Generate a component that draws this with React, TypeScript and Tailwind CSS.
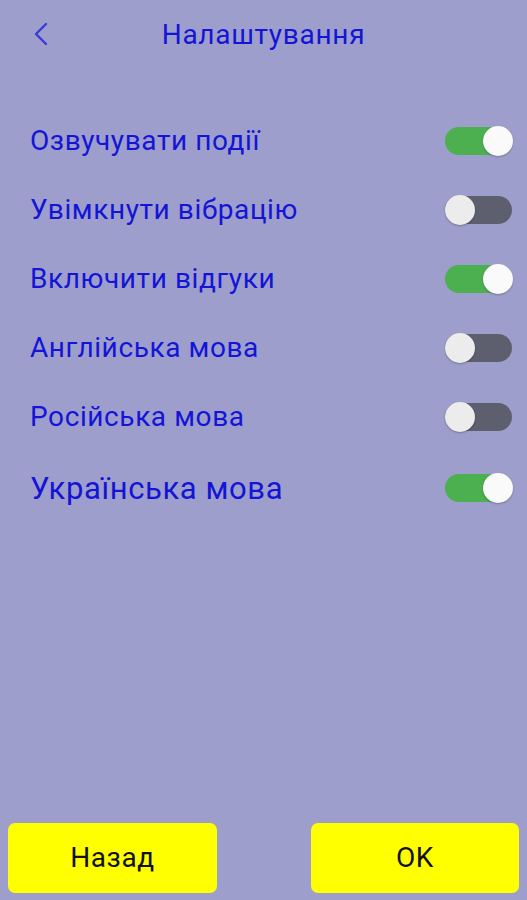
import React from "react";

const rows: { label: string; on: boolean; big?: boolean }[] = [
  { label: "Озвучувати події", on: true },
  { label: "Увімкнути вібрацію", on: false },
  { label: "Включити відгуки", on: true },
  { label: "Англійська мова", on: false },
  { label: "Російська мова", on: false },
  { label: "Українська мова", on: true, big: true },
];

function Toggle({ on }: { on: boolean }) {
  return (
    <div className="relative w-[68px] h-[30px] flex items-center">
      <div className={`w-[67px] h-[28px] rounded-full ${on ? "bg-[#4caf50]" : "bg-[#5e5f6e]"}`} />
      <div
        className={`absolute top-0 w-[30px] h-[30px] rounded-full shadow-[0_1px_2px_rgba(0,0,0,0.25)] ${
          on ? "right-0 bg-[#fafafa]" : "left-0 bg-[#ececec]"
        }`}
      />
    </div>
  );
}

export default function App() {
  return (
    <div
      className="w-[527px] h-[900px] bg-[#9d9ecc] flex flex-col"
      style={{ fontFamily: "Roboto, 'Noto Sans', sans-serif" }}
    >
      <div className="relative h-[70px] flex items-center justify-center">
        <svg
          className="absolute left-[33px] top-[22px]"
          width="16"
          height="24"
          viewBox="0 0 16 24"
          fill="none"
          stroke="#3a3ad8"
          strokeWidth="2.4"
          strokeLinecap="round"
          strokeLinejoin="round"
        >
          <path d="M13 2 L3 12 L13 22" />
        </svg>
        <span className="text-[28px] tracking-[0.7px] text-[#1414d6] leading-none">Налаштування</span>
      </div>
      <div className="flex flex-col pt-[36px] pl-[30px] pr-[14px]">
        {rows.map((r) => (
          <div key={r.label} className={`flex items-center justify-between ${r.big ? "h-[74px]" : "h-[69px]"}`}>
            <span
              className={`${r.big ? "text-[31px]" : "text-[28px]"} tracking-[0.6px] text-[#1414d6] leading-none`}
            >
              {r.label}
            </span>
            <Toggle on={r.on} />
          </div>
        ))}
      </div>
      <div className="mt-auto flex justify-between px-[8px] pb-[7px]">
        <button className="w-[209px] h-[70px] bg-[#ffff00] rounded-[7px] text-[28px] tracking-[0.6px] text-[#111]">
          Назад
        </button>
        <button className="w-[208px] h-[70px] bg-[#ffff00] rounded-[7px] text-[28px] tracking-[0.6px] text-[#111]">
          OK
        </button>
      </div>
    </div>
  );
}
